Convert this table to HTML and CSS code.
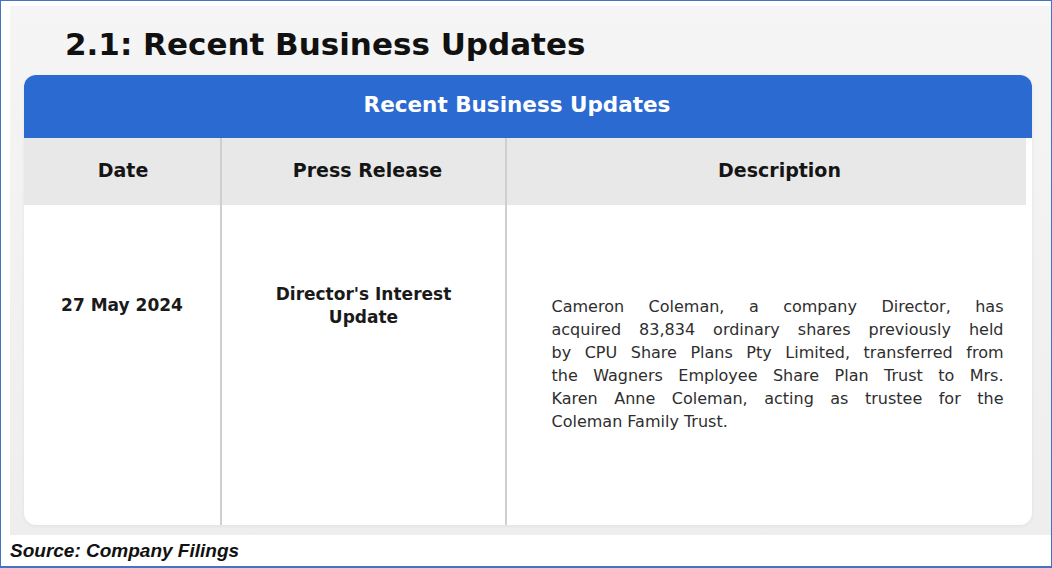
FILE: index.html
```html
<!DOCTYPE html>
<html>
<head>
<meta charset="utf-8">
<link rel="stylesheet" href="styles.css">
</head>
<body>
<div class="frame">
  <div class="panel">
    <h1 class="title">2.1: Recent Business Updates</h1>
    <div class="card">
      <div class="card-head">Recent Business Updates</div>
      <div class="table">
        <div class="th c1">Date</div>
        <div class="th c2">Press Release</div>
        <div class="th c3">Description</div>
        <div class="td c1"><span class="date">27 May 2024</span></div>
        <div class="td c2"><span class="release">Director's Interest<br>Update</span></div>
        <div class="td c3">
          <p class="desc">
            <span class="line">Cameron Coleman, a company Director, has</span>
            <span class="line">acquired 83,834 ordinary shares previously held</span>
            <span class="line">by CPU Share Plans Pty Limited, transferred from</span>
            <span class="line">the Wagners Employee Share Plan Trust to Mrs.</span>
            <span class="line">Karen Anne Coleman, acting as trustee for the</span>
            <span class="line last">Coleman Family Trust.</span>
          </p>
        </div>
      </div>
    </div>
  </div>
  <div class="source">Source: Company Filings</div>
</div>
</body>
</html>
```
FILE: styles.css
```css
html, body {
  margin: 0;
  padding: 0;
  background: #ffffff;
}
.frame {
  box-sizing: border-box;
  width: 1052px;
  height: 568px;
  border: 1px solid #4472c4;
  border-bottom-width: 2px;
  background: #ffffff;
  font-family: "DejaVu Sans", Inter, sans-serif;
  color: #1a1a1a;
}
.panel {
  margin: 5px 0 0 9px;
  height: 529px;
  background: linear-gradient(#f5f5f5, #eeeeee);
  box-sizing: border-box;
  padding-top: 20px;
}
.title {
  margin: 0 0 0 55px;
  height: 49px;
  font-size: 31px;
  font-weight: 700;
  line-height: 36px;
  color: #111111;
}
.card {
  margin-left: 14px;
  width: 1008px;
  height: 450px;
  background: #ffffff;
  border-radius: 12px;
  overflow: hidden;
  box-shadow: 0 1px 4px rgba(0,0,0,0.06);
  display: flex;
  flex-direction: column;
}
.card-head {
  height: 63px;
  box-sizing: border-box;
  padding: 0 22px 4px 0;
  background: #2b6bd1;
  color: #ffffff;
  font-size: 21.5px;
  font-weight: 700;
  display: flex;
  align-items: center;
  justify-content: center;
}
.table {
  flex: 1;
  display: grid;
  grid-template-columns: 196px 287px 1fr;
  grid-template-rows: 67px 1fr;
}
.th {
  background: #e8e8e8;
  display: flex;
  align-items: center;
  justify-content: center;
  font-size: 19px;
  font-weight: 700;
  color: #151515;
  padding-bottom: 4px;
}
.th.c1 { padding: 0 0 3px 2px; }
.th.c2 { padding-left: 8px; }
.th.c3 {
  margin-right: 6px;
  padding-left: 26px;
}
.c2 {
  border-left: 2px solid #cfcfcf;
  border-right: 2px solid #cfcfcf;
}
.td {
  display: flex;
  justify-content: center;
  color: #1a1a1a;
}
.date {
  margin-top: 90px;
  font-size: 17px;
  font-weight: 700;
}
.release {
  margin-top: 78px;
  font-size: 17px;
  font-weight: 700;
  text-align: center;
  line-height: 23px;
}
.desc {
  margin: 90px 28px 0 44px;
  width: 452px;
  font-size: 16px;
  line-height: 23px;
  color: #2e2e2e;
}
.line {
  display: block;
  text-align: justify;
  text-align-last: justify;
  white-space: nowrap;
}
.line.last {
  text-align: left;
  text-align-last: left;
}
.source {
  margin: 5px 0 0 9px;
  font-family: "Liberation Sans", Arial, sans-serif;
  font-style: italic;
  font-weight: 700;
  font-size: 19px;
  color: #111111;
}
```
